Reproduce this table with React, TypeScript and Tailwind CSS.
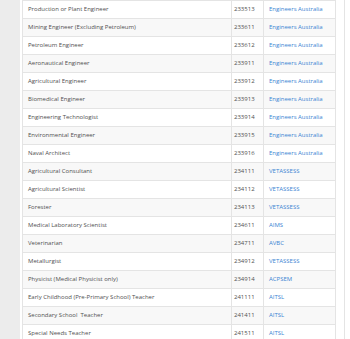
import React from 'react';

const rows: [string, string, string][] = [
  ['Production or Plant Engineer', '233513', 'Engineers Australia'],
  ['Mining Engineer (Excluding Petroleum)', '233611', 'Engineers Australia'],
  ['Petroleum Engineer', '233612', 'Engineers Australia'],
  ['Aeronautical Engineer', '233911', 'Engineers Australia'],
  ['Agricultural Engineer', '233912', 'Engineers Australia'],
  ['Biomedical Engineer', '233913', 'Engineers Australia'],
  ['Engineering Technologist', '233914', 'Engineers Australia'],
  ['Environmental Engineer', '233915', 'Engineers Australia'],
  ['Naval Architect', '233916', 'Engineers Australia'],
  ['Agricultural Consultant', '234111', 'VETASSESS'],
  ['Agricultural Scientist', '234112', 'VETASSESS'],
  ['Forester', '234113', 'VETASSESS'],
  ['Medical Laboratory Scientist', '234611', 'AIMS'],
  ['Veterinarian', '234711', 'AVBC'],
  ['Metallurgist', '234912', 'VETASSESS'],
  ['Physicist (Medical Physicist only)', '234914', 'ACPSEM'],
  ['Early Childhood (Pre-Primary School) Teacher', '241111', 'AITSL'],
  ['Secondary School  Teacher', '241411', 'AITSL'],
  ['Special Needs Teacher', '241511', 'AITSL'],
];

export default function App() {
  return (
    <div className="flex h-[339px] w-[350px] overflow-hidden bg-white font-['Open_Sans',sans-serif]">
      <div className="w-[20px] shrink-0 bg-[#ececec]" />
      <div className="w-[316px] shrink-0 pl-[2px]">
        <table className="w-[314px] table-fixed border-collapse text-[6px] text-[#505050]">
          <colgroup>
            <col className="w-[209px]" />
            <col className="w-[32px]" />
            <col />
          </colgroup>
          <tbody>
            {rows.map(([name, code, body], i) => (
              <tr key={code} className={i % 2 === 1 ? 'bg-[#f8f8f8]' : 'bg-white'}>
                <td className="h-[18px] border border-[#e4e4e4] px-[5px] whitespace-pre">{name}</td>
                <td className="border border-[#e4e4e4] px-[2px] whitespace-nowrap">{code}</td>
                <td className="border border-[#e4e4e4] px-[5px] whitespace-nowrap text-[#3b84d3]">{body}</td>
              </tr>
            ))}
          </tbody>
        </table>
      </div>
      <div className="ml-[8px] w-px bg-[#e4e4e4]" />
    </div>
  );
}
